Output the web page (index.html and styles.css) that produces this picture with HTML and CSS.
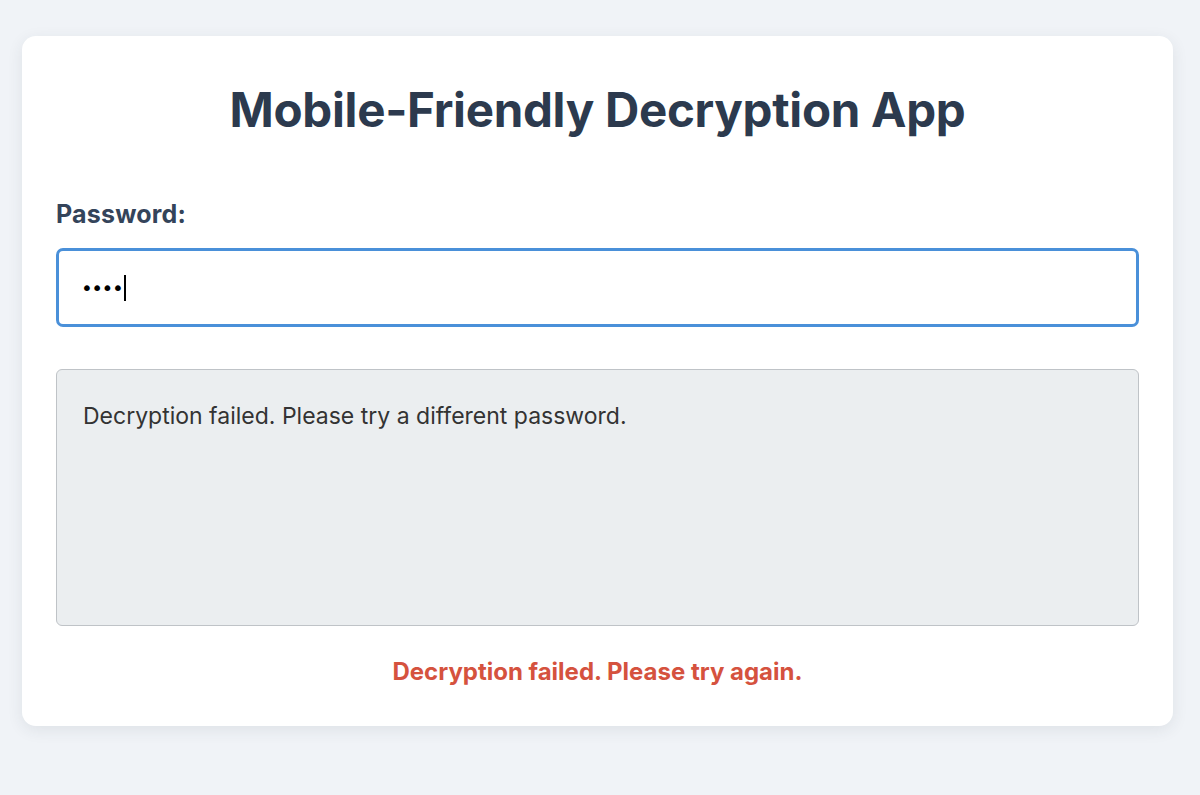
FILE: index.html
```html
<!DOCTYPE html>
<html lang="en">
<head>
    <meta charset="UTF-8">
    <meta name="viewport" content="width=device-width, initial-scale=1.0">
    <title>Mobile-Friendly Decryption App</title>
    <link rel="stylesheet" href="styles.css">
</head>
<body>
    <div class="container">
        <h1>Mobile-Friendly Decryption App</h1>
        <label for="password">Password:</label>
        <div class="field"><span class="dots">&#8226;&#8226;&#8226;&#8226;</span><span class="caret"></span></div>
        <div class="output">Decryption failed. Please try a different password.</div>
        <p class="error">Decryption failed. Please try again.</p>
    </div>
</body>
</html>
```
FILE: styles.css
```css
body {
    margin: 0;
    background: #f0f3f7;
    font-family: Inter, "Noto Sans", sans-serif;
    padding: 36px 27px 70px 22px;
}
.container {
    background: #fff;
    border-radius: 14px;
    box-shadow: 0 4px 16px rgba(40, 50, 70, 0.09);
    padding: 45px 34px 40px 34px;
}
h1 {
    margin: 0 0 60px 0;
    text-align: center;
    font-size: 47.5px;
    line-height: 58px;
    font-weight: 700;
    color: #2c3a4e;
    letter-spacing: -0.3px;
}
label {
    display: block;
    font-size: 25px;
    line-height: 30px;
    font-weight: 700;
    color: #34445a;
    margin-bottom: 19px;
    letter-spacing: 0.2px;
}
.field {
    height: 73px;
    border: 3px solid #4a90d9;
    border-radius: 7px;
    display: flex;
    align-items: center;
    padding: 0 22px;
}
.dots {
    font-family: "DejaVu Sans", sans-serif;
    font-size: 20px;
    letter-spacing: -1.5px;
    color: #000;
}
.caret {
    width: 2px;
    height: 26px;
    background: #000;
    margin-left: 2px;
}
.output {
    margin-top: 42px;
    height: 223px;
    background: #ebeef0;
    border: 1.5px solid #bfc3c7;
    border-radius: 6px;
    padding: 32px 26px 0 26px;
    font-size: 23px;
    color: #333;
}
.error {
    margin: 31px 0 0 0;
    text-align: center;
    font-size: 24px;
    font-weight: 700;
    color: #d5523e;
}
```
